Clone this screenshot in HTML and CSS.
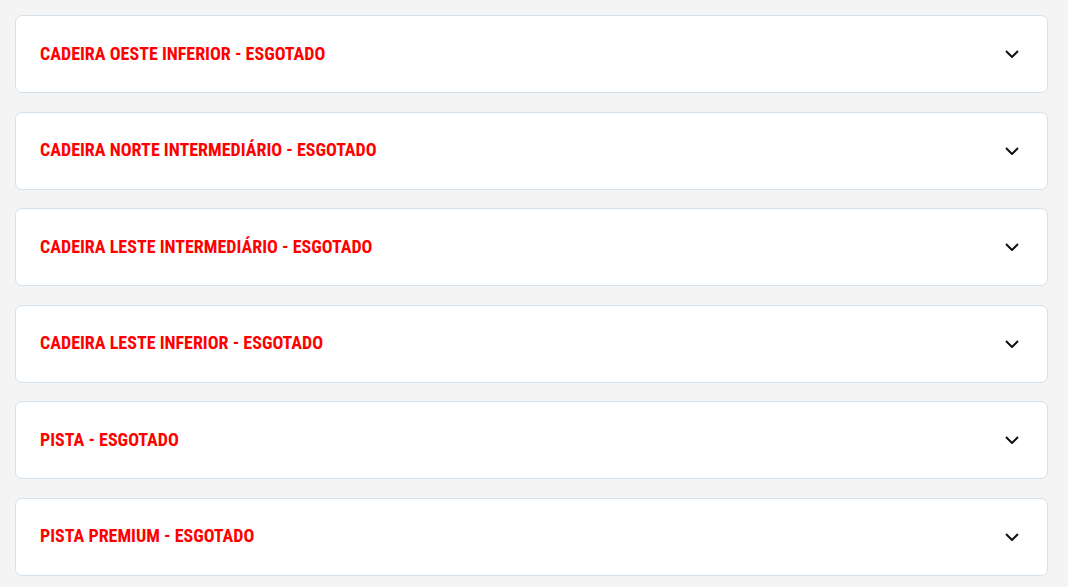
FILE: index.html
```html
<!DOCTYPE html>
<html lang="pt-BR">
<head>
<meta charset="utf-8">
<title>Setores</title>
<link rel="stylesheet" href="styles.css">
</head>
<body>
<div class="list">
  <div class="card"><span class="title">CADEIRA OESTE INFERIOR - ESGOTADO</span><svg class="chev" viewBox="0 0 14 8" width="14" height="8"><path d="M1 1l6 6 6-6" fill="none" stroke="#111" stroke-width="2"/></svg></div>
  <div class="card"><span class="title">CADEIRA NORTE INTERMEDIÁRIO - ESGOTADO</span><svg class="chev" viewBox="0 0 14 8" width="14" height="8"><path d="M1 1l6 6 6-6" fill="none" stroke="#111" stroke-width="2"/></svg></div>
  <div class="card"><span class="title">CADEIRA LESTE INTERMEDIÁRIO - ESGOTADO</span><svg class="chev" viewBox="0 0 14 8" width="14" height="8"><path d="M1 1l6 6 6-6" fill="none" stroke="#111" stroke-width="2"/></svg></div>
  <div class="card"><span class="title">CADEIRA LESTE INFERIOR - ESGOTADO</span><svg class="chev" viewBox="0 0 14 8" width="14" height="8"><path d="M1 1l6 6 6-6" fill="none" stroke="#111" stroke-width="2"/></svg></div>
  <div class="card"><span class="title">PISTA - ESGOTADO</span><svg class="chev" viewBox="0 0 14 8" width="14" height="8"><path d="M1 1l6 6 6-6" fill="none" stroke="#111" stroke-width="2"/></svg></div>
  <div class="card"><span class="title">PISTA PREMIUM - ESGOTADO</span><svg class="chev" viewBox="0 0 14 8" width="14" height="8"><path d="M1 1l6 6 6-6" fill="none" stroke="#111" stroke-width="2"/></svg></div>
</div>
</body>
</html>
```
FILE: styles.css
```css
html, body {
  margin: 0;
  padding: 0;
  background: #f4f4f4;
}
.list {
  padding: 15px 20px 0 15px;
  display: flex;
  flex-direction: column;
  gap: 18.6px;
}
.card {
  box-sizing: border-box;
  height: 78px;
  background: #fff;
  border: 1px solid #d5e1ea;
  border-radius: 7px;
  display: flex;
  align-items: center;
  justify-content: space-between;
  padding: 0 28px 0 24px;
}
.title {
  font-family: "Roboto", sans-serif;
  font-weight: 700;
  font-size: 18px;
  font-stretch: 78%;
  line-height: 20px;
  margin-top: -1px;
  color: #ff0000;
}
.chev {
  display: block;
}
```
